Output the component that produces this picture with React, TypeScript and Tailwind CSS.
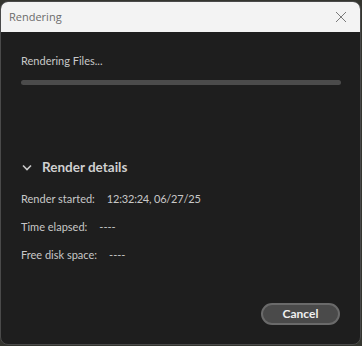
import React from "react";

export default function App() {
  return (
    <div className="w-[362px] h-[346px] bg-[#34352f] relative overflow-hidden" style={{ fontFamily: 'Lato, "Noto Sans", sans-serif' }}>
      <div className="absolute left-0 top-[1px] w-[361px] h-[344px] rounded-[8px] border border-[#4a4a4a] overflow-hidden flex flex-col bg-[#1e1e1e]">
        <div className="h-[30px] bg-[#f3f3f3] flex items-center justify-between pl-[8px] pr-[12px] shrink-0">
          <span className="text-[11px] text-[#6b6b6b]" style={{ fontFamily: '"Open Sans", sans-serif' }}>Rendering</span>
          <svg width="12" height="12" viewBox="0 0 12 12" className="mr-[1px]">
            <path d="M1 1 L11 11 M11 1 L1 11" stroke="#7a7a7a" strokeWidth="1" fill="none" />
          </svg>
        </div>
        <div className="flex-1 flex flex-col px-[20px] pt-[21px]">
          <div className="text-[11px] leading-[16px] text-[#c8c8c8]">Rendering Files...</div>
          <div className="mt-[11px] h-[5px] w-[320px] rounded-full bg-[#4b4b4b]"></div>
          <div className="mt-[72px] flex items-center h-[20px]">
            <svg width="10" height="7" viewBox="0 0 10 7" className="ml-[1px]">
              <path d="M1 1.5 L5 5.5 L9 1.5" stroke="#c8c8c8" strokeWidth="1.6" fill="none" />
            </svg>
            <span className="ml-[10px] text-[13.5px] font-bold text-[#d0d0d0]">Render details</span>
          </div>
          <div className="mt-[14px] flex flex-col gap-[12px] text-[11px] leading-[16px] text-[#c8c8c8]">
            <div className="flex">
              <span>Render started:</span>
              <span className="ml-[12px] tracking-[-0.2px]">12:32:24, 06/27/25</span>
            </div>
            <div className="flex">
              <span>Time elapsed:</span>
              <span className="ml-[12px]">----</span>
            </div>
            <div className="flex">
              <span>Free disk space:</span>
              <span className="ml-[12px]">----</span>
            </div>
          </div>
          <div className="mt-[40px] flex justify-end">
            <button className="w-[79px] h-[22px] rounded-full bg-[#4a4a4a] border-2 border-[#6a6a6a] text-[12px] font-bold text-[#f0f0f0] flex items-center justify-center">
              Cancel
            </button>
          </div>
        </div>
      </div>
    </div>
  );
}
